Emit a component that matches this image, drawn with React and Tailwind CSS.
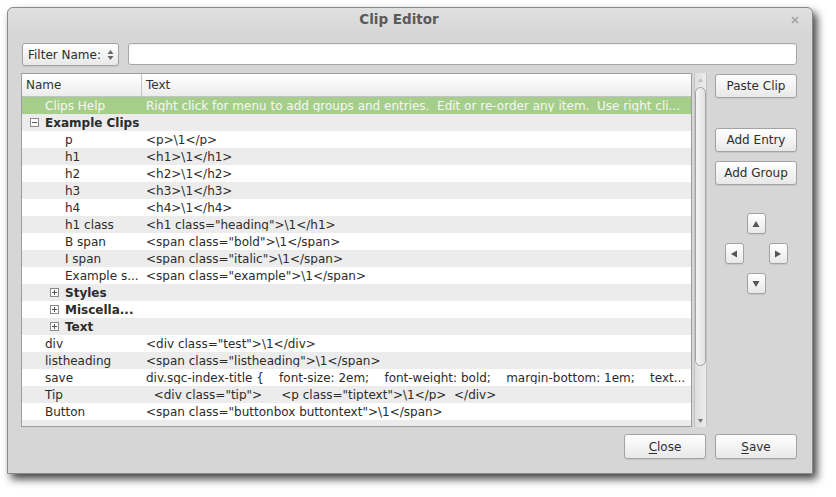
import React from "react";

const rows = [
  { name: "Clips Help", text: "Right click for menu to add groups and entries.  Edit or re-order any item.  Use right cli...", depth: 1, selected: true },
  { name: "Example Clips", group: "open", depth: 0 },
  { name: "p", text: "<p>\\1</p>", depth: 2 },
  { name: "h1", text: "<h1>\\1</h1>", depth: 2 },
  { name: "h2", text: "<h2>\\1</h2>", depth: 2 },
  { name: "h3", text: "<h3>\\1</h3>", depth: 2 },
  { name: "h4", text: "<h4>\\1</h4>", depth: 2 },
  { name: "h1 class", text: '<h1 class="heading">\\1</h1>', depth: 2 },
  { name: "B span", text: '<span class="bold">\\1</span>', depth: 2 },
  { name: "I span", text: '<span class="italic">\\1</span>', depth: 2 },
  { name: "Example s...", text: '<span class="example">\\1</span>', depth: 2 },
  { name: "Styles", group: "closed", depth: 1 },
  { name: "Miscella...", group: "closed", depth: 1 },
  { name: "Text", group: "closed", depth: 1 },
  { name: "div", text: '<div class="test">\\1</div>', depth: 1 },
  { name: "listheading", text: '<span class="listheading">\\1</span>', depth: 1 },
  { name: "save", text: "div.sgc-index-title {    font-size: 2em;    font-weight: bold;    margin-bottom: 1em;    text...", depth: 1 },
  { name: "Tip", text: '  <div class="tip">     <p class="tiptext">\\1</p>  </div>', depth: 1 },
  { name: "Button", text: '<span class="buttonbox buttontext">\\1</span>', depth: 1 },
  { name: "", text: "", depth: 1 },
];

const Expander = ({ open }) => (
  <span className="flex items-center justify-center w-[9px] h-[9px] border border-[#8a8a8a] bg-white shrink-0">
    <svg width="7" height="7" viewBox="0 0 7 7">
      <line x1="1" y1="3.5" x2="6" y2="3.5" stroke="#555" strokeWidth="1" />
      {!open && <line x1="3.5" y1="1" x2="3.5" y2="6" stroke="#555" strokeWidth="1" />}
    </svg>
  </span>
);

const Button = ({ children, className = "" }) => (
  <button
    className={`flex items-center justify-center border border-[#a3a3a3] rounded-[3px] bg-linear-to-b from-white to-[#e8e8e8] text-[12px] text-[#2e2e2e] shadow-[0_1px_1px_rgba(0,0,0,0.08)] ${className}`}
  >
    {children}
  </button>
);

const Arrow = ({ dir }) => {
  const pts = {
    up: "4,1 7.5,7 0.5,7",
    down: "0.5,1 7.5,1 4,7",
    left: "1,4 7,0.5 7,7.5",
    right: "1,0.5 7,4 1,7.5",
  };
  return (
    <Button className="w-[19px] h-[21px] rounded-[2px]">
      <svg width="8" height="8" viewBox="0 0 8 8">
        <polygon points={pts[dir]} fill="#555" />
      </svg>
    </Button>
  );
};

const TreeRow = ({ row, index }) => {
  const bg = row.selected ? "bg-[#a6ce8b]" : index % 2 === 1 ? "bg-[#ececec]" : "bg-white";
  const indent = row.group
    ? row.depth === 0 ? "pl-[8px]" : "pl-[28px]"
    : row.depth === 1 ? "pl-[23px]" : "pl-[43px]";
  return (
    <div className={`flex h-[17px] items-center shrink-0 ${bg} ${row.selected ? "text-[#f7f7f7]" : "text-[#2b2b2b]"}`}>
      <div className={`w-[120px] shrink-0 flex items-center gap-[6px] whitespace-pre ${indent}`}>
        {row.group && <Expander open={row.group === "open"} />}
        <span className={row.group ? "font-bold" : ""}>{row.name}</span>
      </div>
      {row.text !== undefined && (
        <div className="pl-[4px] whitespace-pre overflow-hidden">{row.text}</div>
      )}
    </div>
  );
};

export default function App() {
  return (
    <div className="w-[836px] h-[497px] bg-white pt-[7px] pl-[7px] font-['DejaVu_Sans',sans-serif] text-[12px] leading-none">
      <div className="w-[806px] h-[467px] flex flex-col border border-[#8a8a8a] rounded-t-[6px] bg-[#d6d6d6] shadow-[4px_5px_8px_rgba(0,0,0,0.75)]">
        {/* title bar */}
        <div className="h-[27px] flex items-center pb-[4px] rounded-t-[6px] bg-linear-to-b from-[#e0e0e0] to-[#d6d6d6]">
          <div className="w-[782px] text-center font-bold text-[13.5px] text-[#5a5a5a]">Clip Editor</div>
          <svg width="8" height="8" viewBox="0 0 8 8" className="ml-px">
            <path d="M1 1 L7 7 M7 1 L1 7" stroke="#a2a2a2" strokeWidth="1.6" />
          </svg>
        </div>

        <div className="flex-1 flex flex-col pt-[8px] pl-[13px] pr-[15px] pb-[14px]">
          {/* filter row */}
          <div className="flex h-[23px]">
            <Button className="ml-px w-[97px] h-[23px] justify-start pl-[5px] gap-[6px]">
              <span>Filter Name:</span>
              <svg width="7" height="12" viewBox="0 0 7 12">
                <polygon points="3.5,1 6.5,5 0.5,5" fill="#666" />
                <polygon points="0.5,7 6.5,7 3.5,11" fill="#666" />
              </svg>
            </Button>
            <div className="ml-[9px] flex-1 h-[22px] bg-white border border-[#a7a7a7] rounded-[3px] shadow-[inset_0_1px_1px_rgba(0,0,0,0.06)]" />
          </div>

          {/* main area */}
          <div className="flex mt-[7px] h-[354px]">
            <div className="w-[671px] h-full border border-[#9c9c9c] bg-white flex flex-col overflow-hidden">
              <div className="flex h-[23px] shrink-0 items-center border-b border-[#c3c3c3] bg-linear-to-b from-white to-[#ececec] text-[#333]">
                <div className="w-[120px] h-full flex items-center pl-[4px] border-r border-[#c3c3c3]">Name</div>
                <div className="pl-[4px]">Text</div>
              </div>
              {rows.map((row, i) => (
                <TreeRow key={i} row={row} index={i} />
              ))}
            </div>

            {/* scrollbar */}
            <div className="ml-[2px] w-[13px] h-full flex flex-col items-center border-x border-[#c4c4c4] bg-linear-to-r from-[#dedede] to-[#ececec]">
              <div className="h-[14px] flex items-center justify-center">
                <svg width="5" height="4" viewBox="0 0 5 4">
                  <polygon points="2.5,0 5,4 0,4" fill="#c0c0c0" />
                </svg>
              </div>
              <div className="w-[11px] h-[279px] rounded-full border border-[#a2a2a2] bg-linear-to-r from-[#f4f4f4] to-[#e2e2e2]" />
              <div className="flex-1" />
              <div className="h-[12px] flex items-center justify-center">
                <svg width="5" height="4" viewBox="0 0 5 4">
                  <polygon points="0,0 5,0 2.5,4" fill="#777" />
                </svg>
              </div>
            </div>

            {/* side buttons */}
            <div className="ml-[8px] w-[82px] flex flex-col pt-px">
              <Button className="h-[24px] from-[#fbfbf8] to-[#e1e6d9] border-[#9ca191]">Paste Clip</Button>
              <Button className="h-[24px] mt-[30px]">Add Entry</Button>
              <Button className="h-[24px] mt-[9px]">Add Group</Button>
              <div className="mt-[28px] grid grid-cols-[19px_19px_19px] grid-rows-[21px_21px_21px] gap-x-[3px] gap-y-[9px] justify-center">
                <div />
                <Arrow dir="up" />
                <div />
                <Arrow dir="left" />
                <div />
                <Arrow dir="right" />
                <div />
                <Arrow dir="down" />
                <div />
              </div>
            </div>
          </div>

          {/* bottom buttons */}
          <div className="flex justify-end gap-[9px] mt-[7px]">
            <Button className="w-[82px] h-[25px]">
              <span><span className="underline underline-offset-2">C</span>lose</span>
            </Button>
            <Button className="w-[82px] h-[25px]">
              <span><span className="underline underline-offset-2">S</span>ave</span>
            </Button>
          </div>
        </div>
      </div>
    </div>
  );
}
